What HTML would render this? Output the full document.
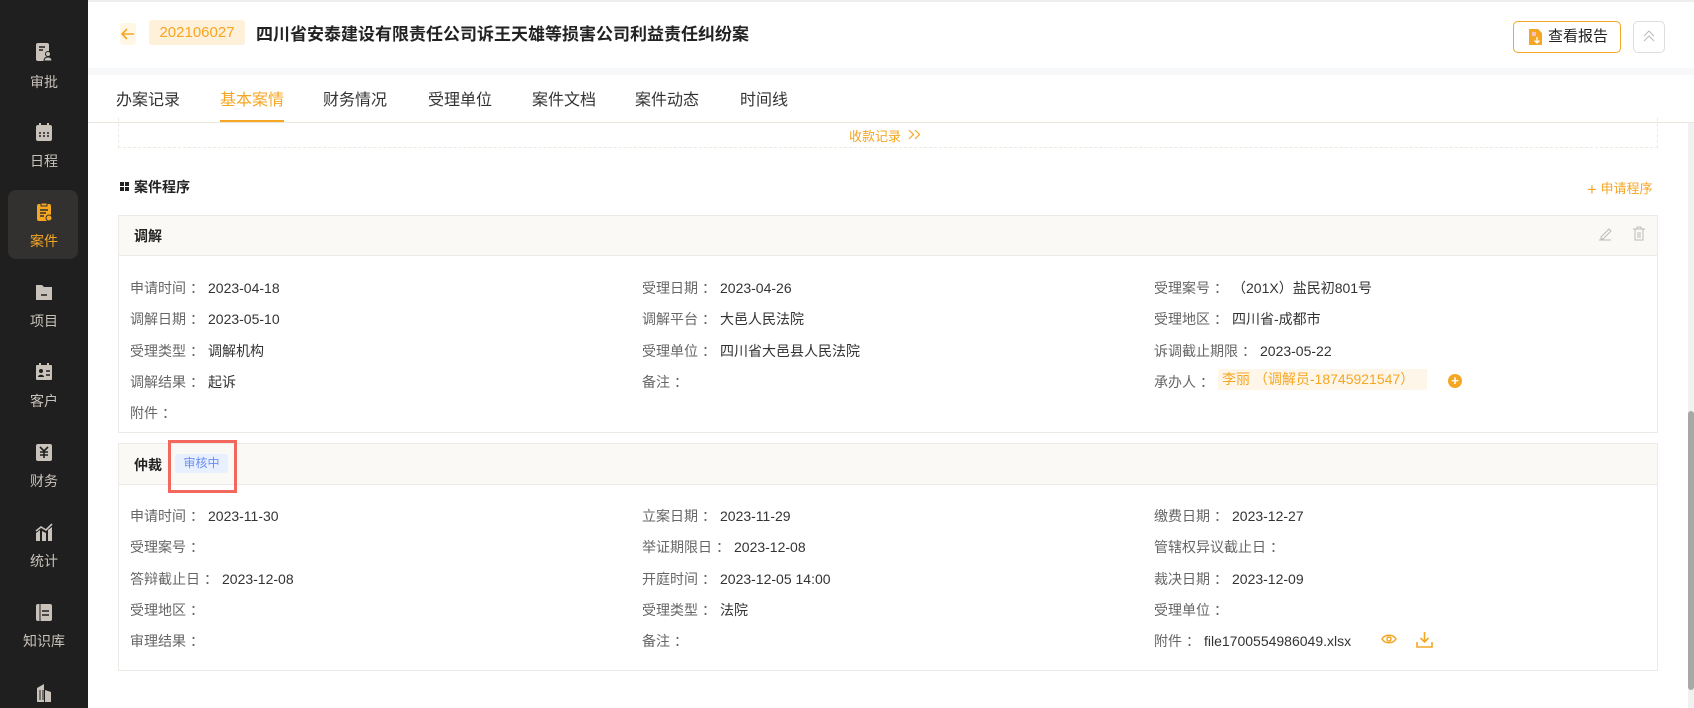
<!DOCTYPE html>
<html><head><meta charset="utf-8"><style>
*{margin:0;padding:0;box-sizing:border-box}
body{width:1694px;height:708px;overflow:hidden;background:#fff;font-family:"Liberation Sans","Noto Sans CJK SC",sans-serif;position:relative;color:#333}
.abs{position:absolute}
.side{left:0;top:0;width:88px;height:708px;background:#1f1f1f}
.si{position:absolute;left:0;width:88px;text-align:center;color:#c8c2ba;font-size:14px}
.ic{position:absolute;left:34px;width:20px;height:20px}
.tab{position:absolute;top:86px;font-size:16px;color:#333}
.lab{position:absolute;font-size:14px;color:#666;white-space:nowrap}
.lab b{font-weight:normal;color:#333}
.lab i{font-style:normal;display:inline-block;margin:0 4px 0 4px}
.card{position:absolute;left:118px;width:1540px;border:1px solid #eeebe6}
.ch{background:#faf9f6;border-bottom:1px solid #eeebe6}
</style></head><body>
<div class="abs" style="left:0;top:0;width:1694px;height:2px;background:#eee"></div>
<div class="abs side"></div>
<div class="abs" style="left:8px;top:190px;width:70px;height:69px;background:#333130;border-radius:8px"></div>
<!-- sidebar -->
<div class="si" style="top:72px">审批</div>
<svg class="ic" style="top:42px" viewBox="0 0 20 20"><rect x="2" y="1" width="13" height="18" rx="2" fill="#c8c2ba"/><path d="M5 5h6M5 8h4" stroke="#1f1f1f" stroke-width="1.5"/><circle cx="14" cy="12" r="2.5" fill="#c8c2ba" stroke="#1f1f1f"/><path d="M10 19c0-3 2-4 4-4s4 1 4 4z" fill="#c8c2ba" stroke="#1f1f1f"/></svg>
<div class="si" style="top:151px">日程</div>
<svg class="ic" style="top:122px" viewBox="0 0 20 20"><rect x="2" y="3" width="16" height="16" rx="2" fill="#c8c2ba"/><rect x="5" y="1" width="2" height="4" fill="#c8c2ba"/><rect x="13" y="1" width="2" height="4" fill="#c8c2ba"/><path d="M5 11h2M9 11h2M13 11h2M5 14h2M9 14h2M13 14h2" stroke="#1f1f1f" stroke-width="1.5"/></svg>
<div class="si" style="top:231px;color:#f5a623">案件</div>
<svg class="ic" style="top:202px" viewBox="0 0 20 20"><rect x="3" y="2" width="14" height="17" rx="2" fill="#f5a623"/><rect x="7" y="1" width="6" height="3" fill="#f5a623" stroke="#333130"/><path d="M6 8h8M6 11h6M6 14h4" stroke="#333130" stroke-width="1.5"/><circle cx="15" cy="16" r="3" fill="#f5a623" stroke="#333130"/></svg>
<div class="si" style="top:311px">项目</div>
<svg class="ic" style="top:282px" viewBox="0 0 20 20"><path d="M2 3h6l2 2h8v13H2z" fill="#c8c2ba"/><path d="M7 13h6" stroke="#1f1f1f" stroke-width="1.5"/></svg>
<div class="si" style="top:391px">客户</div>
<svg class="ic" style="top:362px" viewBox="0 0 20 20"><rect x="2" y="3" width="16" height="15" rx="1" fill="#c8c2ba"/><rect x="5" y="1" width="2" height="4" fill="#c8c2ba"/><rect x="13" y="1" width="2" height="4" fill="#c8c2ba"/><circle cx="7" cy="9" r="2" fill="#1f1f1f"/><path d="M4 15c0-3 6-3 6 0z" fill="#1f1f1f"/><path d="M12 9h4M12 13h4" stroke="#1f1f1f" stroke-width="1.5"/></svg>
<div class="si" style="top:471px">财务</div>
<svg class="ic" style="top:442px" viewBox="0 0 20 20"><rect x="2" y="2" width="16" height="17" rx="2" fill="#c8c2ba"/><path d="M6 5l4 4 4-4M10 9v7M6 10h8M6 13h8" stroke="#1f1f1f" stroke-width="1.6" fill="none"/></svg>
<div class="si" style="top:551px">统计</div>
<svg class="ic" style="top:522px" viewBox="0 0 20 20"><path d="M2 19V11l4-3v11zM8 19V9l4 2v8zM14 19V8l4-3v14z" fill="#c8c2ba"/><path d="M2 9l5-4 5 3 6-6" stroke="#c8c2ba" stroke-width="1.6" fill="none"/></svg>
<div class="si" style="top:631px">知识库</div>
<svg class="ic" style="top:602px" viewBox="0 0 20 20"><rect x="2" y="2" width="16" height="17" rx="2" fill="#c8c2ba"/><path d="M6 2v17" stroke="#1f1f1f"/><path d="M8 9h7M8 13h7" stroke="#1f1f1f" stroke-width="1.6"/></svg>
<svg class="ic" style="top:682px" viewBox="0 0 20 20"><path d="M3 20V6l7-4v18zM11 20V8l6 2v10z" fill="#c8c2ba"/><path d="M6 8v10M9 8v10" stroke="#1f1f1f"/></svg>

<!-- header -->
<div class="abs" style="left:120px;top:23px;width:16px;height:22px;background:#fff6e6;border-radius:3px"></div>
<svg class="abs" style="left:119px;top:26px" width="18" height="16" viewBox="0 0 18 16"><path d="M15 8H3M8 3L3 8l5 5" stroke="#f5a623" stroke-width="1.6" fill="none"/></svg>
<div class="abs" style="left:149px;top:20px;width:96px;height:25px;background:#fff0d9;border-radius:3px;color:#f5a623;font-size:15px;line-height:25px;text-align:center">202106027</div>
<div class="abs" style="left:256px;top:22px;font-size:17px;font-weight:bold;color:#222;line-height:25px">四川省安泰建设有限责任公司诉王天雄等损害公司利益责任纠纷案</div>
<div class="abs" style="left:1513px;top:21px;width:108px;height:32px;border:1px solid #f5a623;border-radius:5px;font-size:15px;line-height:30px;color:#222;padding-left:34px">查看报告</div>
<svg class="abs" style="left:1529px;top:29px" width="13" height="16" viewBox="0 0 13 16"><path d="M0 0h9l4 4v12H0z" fill="#f5a623"/><rect x="3" y="3" width="4" height="4" fill="#f8c0c0"/><path d="M8 8v6M5.5 11.5L8 14l2.5-2.5" stroke="#fff" stroke-width="1.3" fill="none"/></svg>
<div class="abs" style="left:1633px;top:21px;width:32px;height:32px;border:1px solid #ddd;border-radius:5px"></div>
<svg class="abs" style="left:1642px;top:29px" width="14" height="14" viewBox="0 0 14 14"><path d="M2 7l5-5 5 5M2 12l5-5 5 5" stroke="#bbb" fill="none"/></svg>
<div class="abs" style="left:88px;top:68px;width:1606px;height:7px;background:#f7f8fa"></div>

<!-- tabs -->
<div class="tab" style="left:116px">办案记录</div>
<div class="tab" style="left:220px;color:#f5a623">基本案情</div>
<div class="tab" style="left:323px">财务情况</div>
<div class="tab" style="left:428px">受理单位</div>
<div class="tab" style="left:532px">案件文档</div>
<div class="tab" style="left:635px">案件动态</div>
<div class="tab" style="left:740px">时间线</div>
<div class="abs" style="left:220px;top:120px;width:64px;height:3px;background:#f5a623"></div>
<div class="abs" style="left:88px;top:122px;width:1606px;height:1px;background:#ebe5dc"></div>

<div class="abs" style="left:118px;top:118px;width:1540px;height:30px;border:1px dashed #eee8df;border-top:none"></div>
<div class="abs" style="left:849px;top:126px;font-size:13px;color:#f5a623">收款记录</div>
<svg class="abs" style="left:908px;top:129px" width="14" height="11" viewBox="0 0 14 11"><path d="M1 1l4.5 4.5L1 10M7 1l4.5 4.5L7 10" stroke="#f5a623" stroke-width="1.2" fill="none"/></svg>

<!-- scrollbar -->
<div class="abs" style="left:1688px;top:123px;width:6px;height:585px;background:#f1f1f1"></div>
<div class="abs" style="left:1688px;top:411px;width:6px;height:279px;background:#a8a8a8;border-radius:3px"></div>

<!-- section -->
<svg class="abs" style="left:120px;top:182px" width="9" height="9" viewBox="0 0 9 9"><rect width="4" height="4" fill="#222"/><rect x="5" width="4" height="4" fill="#222"/><rect y="5" width="4" height="4" fill="#222"/><rect x="5" y="5" width="4" height="4" fill="#222"/></svg>
<div class="abs" style="left:134px;top:177px;font-size:14px;font-weight:bold;color:#222">案件程序</div>
<div class="abs" style="left:1587px;top:178px;font-size:13px;color:#f5a623"><span style="font-size:17px;vertical-align:-2px">+</span> 申请程序</div>

<!-- card 1 -->
<div class="card" style="top:215px;height:218px"><div class="ch" style="height:40px"></div></div>
<div class="abs" style="left:134px;top:226px;font-size:14px;font-weight:bold;color:#222">调解</div>
<svg class="abs" style="left:1598px;top:226px" width="14" height="15" viewBox="0 0 14 15"><path d="M3 11l8-8 2 2-8 8H3z M1 14h12" stroke="#bbb" fill="none"/></svg>
<svg class="abs" style="left:1632px;top:226px" width="14" height="15" viewBox="0 0 14 15"><path d="M1 3h12M5 3V1h4v2M3 3v11h8V3M6 6v6M8 6v6" stroke="#bbb" fill="none"/></svg>
<div class="lab" style="left:130px;top:278px">申请时间<i>：</i><b>2023-04-18</b></div>
<div class="lab" style="left:130px;top:309px">调解日期<i>：</i><b>2023-05-10</b></div>
<div class="lab" style="left:130px;top:341px">受理类型<i>：</i><b>调解机构</b></div>
<div class="lab" style="left:130px;top:372px">调解结果<i>：</i><b>起诉</b></div>
<div class="lab" style="left:130px;top:403px">附件<i>：</i></div>
<div class="lab" style="left:642px;top:278px">受理日期<i>：</i><b>2023-04-26</b></div>
<div class="lab" style="left:642px;top:309px">调解平台<i>：</i><b>大邑人民法院</b></div>
<div class="lab" style="left:642px;top:341px">受理单位<i>：</i><b>四川省大邑县人民法院</b></div>
<div class="lab" style="left:642px;top:372px">备注<i>：</i></div>
<div class="lab" style="left:1154px;top:278px">受理案号<i>：</i><b>（201X）盐民初801号</b></div>
<div class="lab" style="left:1154px;top:309px">受理地区<i>：</i><b>四川省-成都市</b></div>
<div class="lab" style="left:1154px;top:341px">诉调截止期限<i>：</i><b>2023-05-22</b></div>
<div class="lab" style="left:1154px;top:372px">承办人<i>：</i></div>
<div class="abs" style="left:1218px;top:369px;width:209px;height:21px;background:#fff6ea;color:#f5a623;font-size:14px;line-height:21px;padding-left:4px">李丽 （调解员-18745921547）</div>
<div class="abs" style="left:1448px;top:374px;width:14px;height:14px;border-radius:50%;background:#f5a623;color:#fff;font-size:13px;line-height:14px;text-align:center;font-weight:bold">+</div>

<!-- card 2 -->
<div class="card" style="top:443px;height:228px"><div class="ch" style="height:41px"></div></div>
<div class="abs" style="left:134px;top:455px;font-size:14px;font-weight:bold;color:#222">仲裁</div>
<div class="abs" style="left:175px;top:454px;width:53px;height:19px;background:#e8efff;border-radius:3px;color:#6b8ff0;font-size:12px;line-height:19px;text-align:center">审核中</div>
<div class="abs" style="left:168px;top:440px;width:69px;height:53px;border:3px solid #f2685c"></div>
<div class="lab" style="left:130px;top:506px">申请时间<i>：</i><b>2023-11-30</b></div>
<div class="lab" style="left:130px;top:537px">受理案号<i>：</i></div>
<div class="lab" style="left:130px;top:569px">答辩截止日<i>：</i><b>2023-12-08</b></div>
<div class="lab" style="left:130px;top:600px">受理地区<i>：</i></div>
<div class="lab" style="left:130px;top:631px">审理结果<i>：</i></div>
<div class="lab" style="left:642px;top:506px">立案日期<i>：</i><b>2023-11-29</b></div>
<div class="lab" style="left:642px;top:537px">举证期限日<i>：</i><b>2023-12-08</b></div>
<div class="lab" style="left:642px;top:569px">开庭时间<i>：</i><b>2023-12-05 14:00</b></div>
<div class="lab" style="left:642px;top:600px">受理类型<i>：</i><b>法院</b></div>
<div class="lab" style="left:642px;top:631px">备注<i>：</i></div>
<div class="lab" style="left:1154px;top:506px">缴费日期<i>：</i><b>2023-12-27</b></div>
<div class="lab" style="left:1154px;top:537px">管辖权异议截止日<i>：</i></div>
<div class="lab" style="left:1154px;top:569px">裁决日期<i>：</i><b>2023-12-09</b></div>
<div class="lab" style="left:1154px;top:600px">受理单位<i>：</i></div>
<div class="lab" style="left:1154px;top:631px">附件<i>：</i><b>file1700554986049.xlsx</b></div>
<svg class="abs" style="left:1381px;top:633px" width="16" height="12" viewBox="0 0 16 12"><path d="M1 6c3-5 11-5 14 0-3 5-11 5-14 0z" stroke="#f5a623" stroke-width="1.5" fill="none"/><circle cx="8" cy="6" r="2" stroke="#f5a623" stroke-width="1.5" fill="none"/></svg>
<svg class="abs" style="left:1416px;top:631px" width="17" height="17" viewBox="0 0 17 17"><path d="M8.5 1v10M4.5 7l4 4 4-4M1 11v5h15v-5" stroke="#f5a623" stroke-width="1.6" fill="none"/></svg>
</body></html>
